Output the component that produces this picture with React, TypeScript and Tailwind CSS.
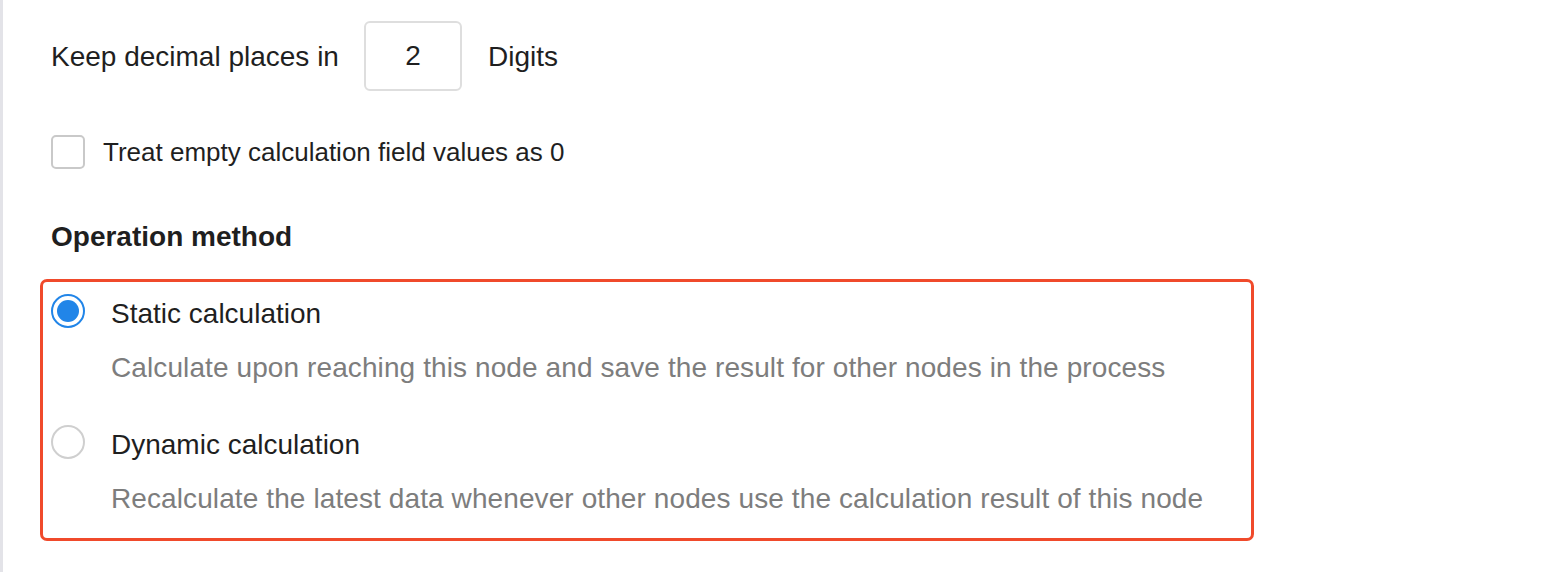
export default function App() {
  const options = [
    {
      title: 'Static calculation',
      desc: 'Calculate upon reaching this node and save the result for other nodes in the process',
      checked: true,
    },
    {
      title: 'Dynamic calculation',
      desc: 'Recalculate the latest data whenever other nodes use the calculation result of this node',
      checked: false,
    },
  ]

  return (
    <div className="h-[572px] w-full bg-white border-l-[3px] border-[#e3e3e8] pl-[48px] font-['Liberation_Sans',Arial,sans-serif] text-[#1f1f1f] text-[28px]">
      <div className="pt-[21px] flex items-center">
        <span className="pt-[2px]">Keep decimal places in</span>
        <div className="ml-[25px] w-[98px] h-[70px] rounded-[6px] border-2 border-[#dedede] flex items-center justify-center">
          2
        </div>
        <span className="ml-[26px] pt-[2px]">Digits</span>
      </div>

      <div className="mt-[44px] flex items-center h-[34px]">
        <div className="size-[34px] rounded-[5px] border-2 border-[#c9c9c9]" />
        <span className="ml-[18px] leading-[34px] text-[26px]">Treat empty calculation field values as 0</span>
      </div>

      <div className="mt-[52px] leading-[32px] font-bold">Operation method</div>

      <div className="mt-[26px] -ml-[11px] w-[1214px] h-[262px] rounded-[7px] border-[3px] border-[#f04a2b] pl-[8px] pt-[12px]">
        {options.map((o, i) => (
          <div key={o.title} className={`flex gap-[26px] ${i > 0 ? 'mt-[41px]' : ''}`}>
            {o.checked ? (
              <div className="size-[34px] shrink-0 rounded-full border-2 border-[#2185e8] flex items-center justify-center">
                <div className="size-[22px] rounded-full bg-[#2185e8]" />
              </div>
            ) : (
              <div className="size-[34px] shrink-0 rounded-full border-2 border-[#cfcfcf]" />
            )}
            <div className="flex flex-col pt-[3px]">
              <div className="leading-[34px]">{o.title}</div>
              <div className="mt-[21px] leading-[32px] tracking-[0.1px] text-[#7d7d7d]">{o.desc}</div>
            </div>
          </div>
        ))}
      </div>
    </div>
  )
}
